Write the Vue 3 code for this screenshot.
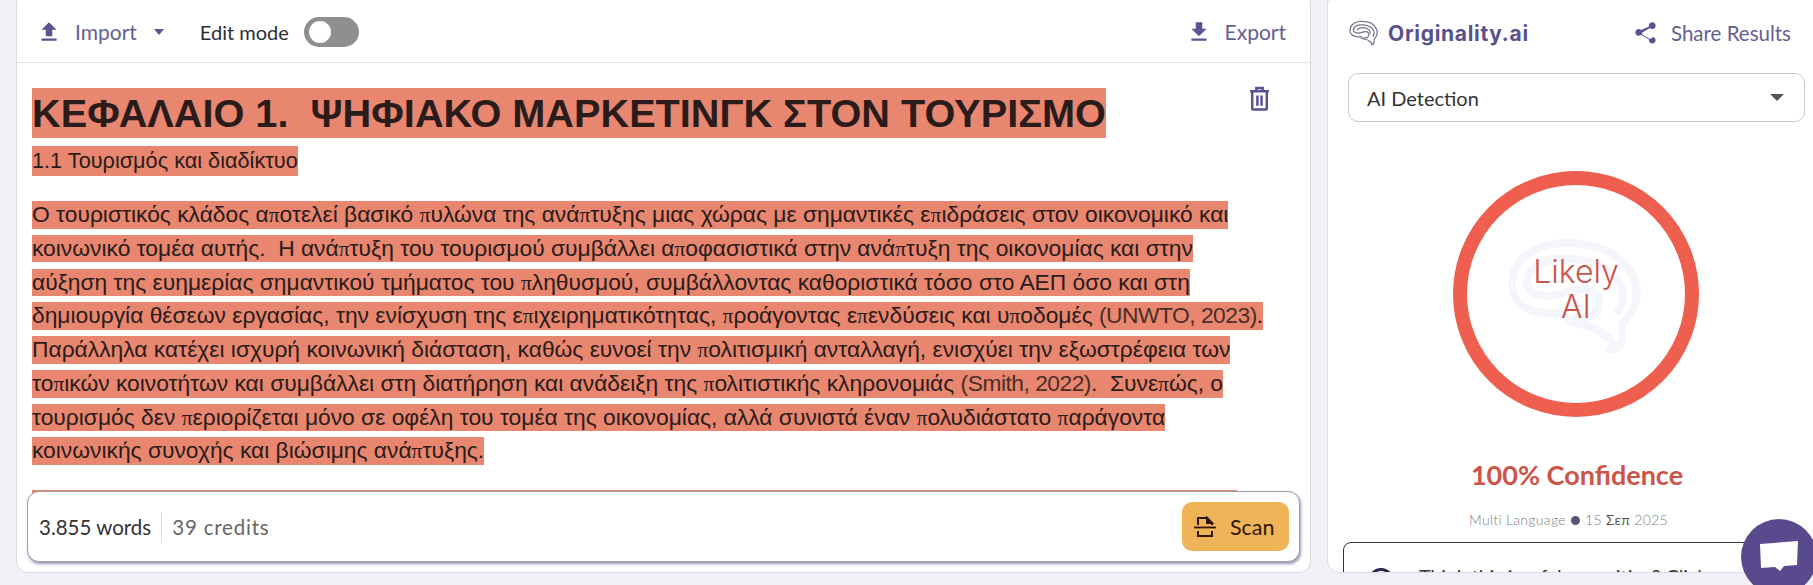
<template>
  <div class="page">
    <section class="editor">
      <header class="toolbar">
        <button class="tool-btn">
          <svg class="tool-icon" viewBox="0 0 24 24"><path d="M9 16h6v-6h4l-7-7-7 7h4zm-4 2h14v2H5z" /></svg>
          Import
          <span class="caret import-caret"></span>
        </button>
        <span class="edit-label">Edit mode</span>
        <span class="toggle"><span class="knob"></span></span>
        <button class="tool-btn export">
          <svg class="tool-icon" viewBox="0 0 24 24"><path d="M19 9h-4V3H9v6H5l7 7 7-7zM5 18v2h14v-2H5z" /></svg>
          Export
        </button>
      </header>

      <div class="doc">
        <svg class="trash" viewBox="0 0 20 24" fill="none" stroke="currentColor" stroke-width="2.4">
          <path d="M1 5h18M7 5V2h6v3M3 5v16.500a1 1 0 0 0 1 1h12a1 1 0 0 0 1-1V5M8 9v10M12 9v10" />
        </svg>
        <h1 class="mark title">{{ title }}</h1>
        <h2 class="mark subtitle">1.1 Τουρισμός και διαδίκτυο</h2>
        <div class="para">
          <div v-for="(line, i) in lines" :key="i" class="mark line">
            <span v-for="(part, j) in line" :key="j" :class="part.cls">{{ part.text }}</span>
          </div>
        </div>
        <div class="mark next-line">&nbsp;</div>

        <div class="scan-bar">
          <span class="words">3.855 words</span>
          <span class="credits">39 credits</span>
          <button class="scan-btn">
            <svg class="scan-icon" viewBox="0 0 24 24" fill="none" stroke="currentColor" stroke-width="2">
              <path d="M5 10V3h9l5 5v2" />
              <path d="M14 3l5 5h-5z" fill="currentColor" />
              <path d="M1 12.500h22" stroke-width="1.800" />
              <path d="M5 16v5h14v-5" />
            </svg>
            Scan
          </button>
        </div>
      </div>
    </section>

    <aside class="results">
      <header class="brand-row">
        <svg class="brain" viewBox="0 0 32 28" fill="none" stroke="#77738c" stroke-width="1.300" stroke-linecap="round">
          <path :d="brainOuter" />
          <path :d="brainInner" />
          <path :d="brainCore" />
        </svg>
        <span class="brand">Originality.ai</span>
        <button class="share">
          <svg class="share-icon" viewBox="0 0 24 24"><path d="M18 16.100c-.8 0-1.500.3-2 .8L8.900 12.700c.1-.2.1-.5.1-.7s0-.5-.1-.7L16 7.200c.5.5 1.200.8 2 .8 1.700 0 3-1.300 3-3s-1.300-3-3-3-3 1.300-3 3c0 .2 0 .5.1.7L8 8.800C7.500 8.300 6.800 8 6 8c-1.700 0-3 1.300-3 3s1.300 3 3 3c.8 0 1.500-.3 2-.8l7.100 4.200c-.1.200-.1.400-.1.600 0 1.600 1.300 2.900 3 2.900s3-1.300 3-2.900-1.300-2.900-3-2.900z" /></svg>
          Share Results
        </button>
      </header>

      <div class="select">
        <span>AI Detection</span>
        <span class="caret select-caret"></span>
      </div>

      <div class="gauge">
        <svg class="gauge-brain" viewBox="0 0 32 28" fill="none" stroke="#f5f6fb" stroke-width="1.800" stroke-linecap="round">
          <path :d="brainOuter" />
          <path :d="brainInner" />
        </svg>
        <span class="gauge-text">Likely<br />AI</span>
      </div>

      <p class="confidence">100% Confidence</p>
      <p class="meta">Multi Language <i class="dot"></i> 15 <b>Σεπ</b> 2025</p>

      <div class="feedback">
        <span class="feedback-icon"></span>
        <span class="feedback-text">Think this is a false positive? Click here</span>
      </div>
    </aside>

    <button class="chat">
      <svg viewBox="0 0 38 32"><path d="M0 3l38-3 -1 24-13 1-4 5-5-4-14 1z" fill="#fff" /></svg>
    </button>
  </div>
</template>

<script setup>
const title = "ΚΕΦΑΛΑΙΟ 1.  ΨΗΦΙΑΚΟ ΜΑΡΚΕΤΙΝΓΚ ΣΤΟΝ ΤΟΥΡΙΣΜΟ";

const text = [
  "Ο τουριστικός κλάδος αποτελεί βασικό πυλώνα της ανάπτυξης μιας χώρας με σημαντικές επιδράσεις στον οικονομικό και",
  "κοινωνικό τομέα αυτής.  Η ανάπτυξη του τουρισμού συμβάλλει αποφασιστικά στην ανάπτυξη της οικονομίας και στην",
  "αύξηση της ευημερίας σημαντικού τμήματος του πληθυσμού, συμβάλλοντας καθοριστικά τόσο στο ΑΕΠ όσο και στη",
  "δημιουργία θέσεων εργασίας, την ενίσχυση της επιχειρηματικότητας, προάγοντας επενδύσεις και υποδομές (UNWTO, 2023).",
  "Παράλληλα κατέχει ισχυρή κοινωνική διάσταση, καθώς ευνοεί την πολιτισμική ανταλλαγή, ενισχύει την εξωστρέφεια των",
  "τοπικών κοινοτήτων και συμβάλλει στη διατήρηση και ανάδειξη της πολιτιστικής κληρονομιάς (Smith, 2022).  Συνεπώς, ο",
  "τουρισμός δεν περιορίζεται μόνο σε οφέλη του τομέα της οικονομίας, αλλά συνιστά έναν πολυδιάστατο παράγοντα",
  "κοινωνικής συνοχής και βιώσιμης ανάπτυξης.",
];

const lines = text.map((line) =>
  line
    .split(/(π|\(UNWTO, 2023\)|\(Smith, 2022\))/)
    .filter(Boolean)
    .map((part) => ({
      text: part,
      cls: part === "π" ? "pi" : part.startsWith("(") ? "cite" : "",
    }))
);

const brainOuter =
  "M24 25.500c.6-1.500-.6-2.300-1.800-3.300-2-1.600-4-2.200-6-2.500-1.700-.3-3-1-3.200-2.500-3 .5-6.500.2-9-1.500C1.500 14 1 11 2 8c1.500-4 6-6.500 12-6.500 7 0 13 3 15 8 1.300 3.500.8 6.500-1.500 9-1 1-1.500 2-1 3.500.3 1.200-.5 3.500-2.500 3.500z";
const brainInner =
  "M25.500 17c1.500-2.500 1.500-5-.5-7.500C22.500 6.500 18 5 13.500 5 9 5 5.500 7 5 10c-.3 2 1.500 3.500 4.500 3.500s5-1.500 8-1.500c3 0 4 2 3.500 4-.5 2.200-3 3-5 2.500";
const brainCore = "M9 10c2-2 6-2.500 9-1.500 3 1 4.500 3 4.500 5";
</script>

<style>
body {
  background: #f2f0f7;
}
</style>

<style scoped>
.page {
  position: relative;
  display: flex;
  gap: 16px;
  width: 1813px;
  height: 585px;
  padding: 0 0 12px 16px;
  box-sizing: border-box;
  overflow: hidden;
  background: #f2f0f7;
  font-family: Lato, "Noto Sans", sans-serif;
}

button {
  border: 0;
  background: none;
  padding: 0;
  font: inherit;
  cursor: pointer;
}

.editor,
.results {
  display: flex;
  flex-direction: column;
  margin-top: -8px;
  box-sizing: border-box;
  background: #fff;
  border: 1px solid #dcdae6;
  border-radius: 12px;
  overflow: hidden;
}

.editor {
  position: relative;
  flex: none;
  width: 1295px;
}

.toolbar {
  display: flex;
  align-items: center;
  flex: none;
  height: 70px;
  padding: 8px 24px 0 19px;
  box-sizing: border-box;
  border-bottom: 1px solid #e2e1e8;
}

.tool-btn {
  display: flex;
  align-items: center;
  gap: 13px;
  color: #655f93;
  font-size: 21px;
}

.tool-icon {
  width: 26px;
  height: 26px;
  fill: #5d5292;
}

.caret {
  width: 0;
  height: 0;
  border-left: 5.500px solid transparent;
  border-right: 5.500px solid transparent;
  border-top: 6px solid #5d5292;
}

.import-caret {
  margin-left: 4px;
}

.edit-label {
  margin-left: 36px;
  color: #2d2d33;
  font-size: 20px;
}

.toggle {
  display: flex;
  align-items: center;
  width: 55px;
  height: 30px;
  margin-left: 15px;
  padding-left: 5px;
  box-sizing: border-box;
  background: #8f8f8f;
  border-radius: 15px;
}

.knob {
  width: 22px;
  height: 22px;
  background: #fff;
  border-radius: 50%;
}

.export {
  margin-left: auto;
}

.doc {
  flex: 1;
  position: relative;
  padding: 25px 15px 0;
  color: #2a1c1b;
  font-family: "Liberation Sans", Arial, sans-serif;
  overflow: hidden;
}

.mark {
  width: fit-content;
  background: #e8866f;
  white-space: pre;
}

.trash {
  position: absolute;
  top: 23px;
  left: 1232px;
  width: 21px;
  height: 25px;
  color: #5a5290;
}

.title {
  margin: 0;
  font-size: 39.700px;
  font-weight: 700;
  line-height: 50px;
}

.subtitle {
  margin: 8px 0 0;
  font-size: 21.700px;
  font-weight: 400;
  line-height: 30px;
}

.para {
  display: flex;
  flex-direction: column;
  gap: 6.200px;
  margin-top: 25px;
  font-size: 22.800px;
}

.line {
  height: 27.600px;
  line-height: 27.600px;
}

.pi {
  font-family: "Liberation Serif", serif;
  font-size: 21.500px;
}

.cite {
  color: #4a2e28;
  letter-spacing: -0.5px;
}

.next-line {
  width: 1205px;
  margin-top: 25px;
  line-height: 27px;
}

.scan-bar {
  position: absolute;
  left: 10px;
  right: 10px;
  bottom: 10px;
  display: flex;
  align-items: center;
  height: 71px;
  padding: 0 10px 0 11px;
  box-sizing: border-box;
  background: #fff;
  border: 1px solid #a09ca8;
  border-radius: 12px;
  box-shadow: 1px 2px 3px rgba(70, 60, 120, 0.55);
  font-family: Lato, "Noto Sans", sans-serif;
  font-size: 20.500px;
}

.words {
  padding-right: 10px;
  color: #333;
  border-right: 1px solid #ddd;
  line-height: 30px;
}

.credits {
  margin-left: 10px;
  color: #666;
  letter-spacing: 0.8px;
}

.scan-btn {
  display: flex;
  align-items: center;
  gap: 13px;
  margin-left: auto;
  width: 107px;
  height: 49px;
  padding-left: 11px;
  box-sizing: border-box;
  background: #f0b458;
  border-radius: 10px;
  color: #2f1407;
  font-size: 21.500px;
}

.scan-icon {
  width: 24px;
  height: 24px;
}

.results {
  flex: none;
  width: 500px;
  padding: 8px 0 0;
}

.brand-row {
  display: flex;
  align-items: center;
  flex: none;
  height: 54px;
  padding: 10px 35px 0 20px;
  box-sizing: border-box;
}

.brain {
  width: 32px;
  height: 27px;
}

.brand {
  margin-left: 8px;
  color: #57508a;
  font-family: Inter, sans-serif;
  font-size: 21px;
  font-weight: 700;
  letter-spacing: 0.7px;
}

.share {
  display: flex;
  align-items: center;
  gap: 12px;
  margin-left: auto;
  color: #655f93;
  font-size: 20.500px;
}

.share-icon {
  width: 27px;
  height: 27px;
  fill: #5d5292;
}

.select {
  display: flex;
  align-items: center;
  justify-content: space-between;
  flex: none;
  width: 457px;
  height: 49px;
  margin: 18px 0 0 20px;
  padding: 0 20px 0 18px;
  box-sizing: border-box;
  border: 1px solid #c6c5cc;
  border-radius: 10px;
  color: #333;
  font-size: 20px;
}

.select-caret {
  border-left-width: 7px;
  border-right-width: 7px;
  border-top: 7px solid #555;
}

.gauge {
  position: relative;
  display: flex;
  align-items: center;
  justify-content: center;
  flex: none;
  width: 246px;
  height: 246px;
  margin: 49px 0 0 125px;
  box-sizing: border-box;
  border: 14px solid #ee5f50;
  border-radius: 50%;
}

.gauge-brain {
  position: absolute;
  left: 31px;
  top: 51px;
  width: 156px;
  height: 124px;
}

.gauge-text {
  position: relative;
  margin-top: -10px;
  color: #c9564a;
  font-family: Inter, sans-serif;
  font-size: 32px;
  font-weight: 300;
  line-height: 35px;
  text-align: center;
}

.confidence {
  flex: none;
  margin: 42px 0 0;
  color: #cc5548;
  font-size: 27px;
  font-weight: 700;
  line-height: 32px;
  text-align: center;
  width: 498px;
}

.meta {
  flex: none;
  margin: 19px 0 0;
  width: 481px;
  color: #7c7c82;
  font-size: 14px;
  font-weight: 300;
  letter-spacing: 0.3px;
  line-height: 20px;
  text-align: center;
}

.meta b {
  color: #555;
  font-weight: 400;
}

.dot {
  display: inline-block;
  width: 9px;
  height: 9px;
  margin: 0 1px;
  background: #5a5575;
  border-radius: 50%;
}

.feedback {
  display: flex;
  align-items: flex-start;
  flex: none;
  gap: 25px;
  width: 462px;
  height: 60px;
  margin: 12px 0 0 15px;
  padding: 22px 24px;
  box-sizing: border-box;
  border: 1px solid #33333d;
  border-radius: 8px;
  color: #333;
  font-size: 19.500px;
}

.feedback-text {
  width: 300px;
  line-height: 24px;
}

.feedback-icon {
  flex: none;
  width: 26px;
  height: 26px;
  margin-top: 3px;
  box-sizing: border-box;
  border: 3px solid #2b2650;
  border-radius: 50%;
}

.chat {
  position: absolute;
  top: 519px;
  right: -4px;
  display: flex;
  align-items: center;
  justify-content: center;
  width: 76px;
  height: 76px;
  background: #584a8c;
  border-radius: 50%;
}

.chat svg {
  width: 38px;
  height: 32px;
}
</style>
